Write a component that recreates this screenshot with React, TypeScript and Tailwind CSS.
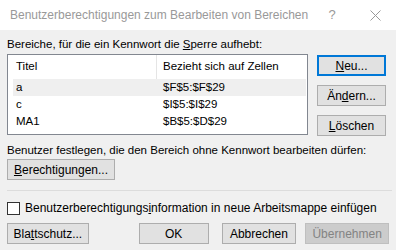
import React from "react";

const font = { fontFamily: '"Liberation Sans", Arial, sans-serif' };

const btn =
  "flex items-center justify-center h-[21px] border border-[#adadad] bg-[#e1e1e1] text-[12px] text-black leading-none whitespace-nowrap";

const rows = [
  { title: "a", ref: "$F$5:$F$29", selected: true },
  { title: "c", ref: "$I$5:$I$29", selected: false },
  { title: "MA1", ref: "$B$5:$D$29", selected: false },
];

export default function App() {
  return (
    <div className="w-[396px] h-[250px] bg-[#f0f0f0] flex flex-col overflow-hidden whitespace-nowrap" style={font}>
      {/* Titelleiste */}
      <div className="h-[30px] bg-white flex items-center shrink-0">
        <span className="pl-[10px] text-[12px] text-[#999999] flex-1">
          Benutzerberechtigungen zum Bearbeiten von Bereichen
        </span>
        <span className="w-[50px] text-center text-[13px] text-[#999999]">?</span>
        <span className="w-[42px] flex justify-center text-[#999999]">
          <svg width="11" height="11" viewBox="0 0 11 11">
            <path d="M0.5 0.5 L10.5 10.5 M10.5 0.5 L0.5 10.5" stroke="#999999" strokeWidth="1" />
          </svg>
        </span>
      </div>

      <div className="px-[7px] pt-[6px] flex flex-col text-[11.5px] text-black">
        <div className="leading-[16px]">
          Bereiche, für die ein Kennwort die <span className="underline">S</span>perre aufhebt:
        </div>

        <div className="flex mt-[2px] gap-[9px]">
          {/* Liste */}
          <div className="w-[301px] h-[81px] border border-[#828790] bg-white pl-[5px] pr-[1px]">
            <div className="flex h-[24px] items-center">
              <div className="w-[144px] pl-[3px] border-r border-[#e5e5e5] h-full flex items-center">
                Titel
              </div>
              <div className="pl-[6px]">Bezieht sich auf Zellen</div>
            </div>
            {rows.map((r) => (
              <div
                key={r.title}
                className={`flex h-[17px] items-center ${r.selected ? "bg-[#efefef]" : ""}`}
              >
                <div className="w-[145px] pl-[3px]">{r.title}</div>
                <div className="pl-[5px]">{r.ref}</div>
              </div>
            ))}
          </div>

          {/* Seitenbuttons */}
          <div className="flex flex-col gap-[9px] pt-[1px]">
            <div className={`${btn} w-[69px] !border-2 !border-[#0078d7]`}>
              <span className="underline">N</span>eu...
            </div>
            <div className={`${btn} w-[69px]`}>
              Än<span className="underline">d</span>ern...
            </div>
            <div className={`${btn} w-[69px]`}>
              <span className="underline">L</span>öschen
            </div>
          </div>
        </div>

        <div className="mt-[6px] leading-[16px]">
          Benutzer festlegen, die den Bereich ohne Kennwort bearbeiten dürfen:
        </div>
        <div className={`${btn} w-[108px] mt-[1px]`}>
          <span className="underline">B</span>erechtigungen...
        </div>

        <div className="mt-[10px] h-px bg-[#dcdcdc] w-[385px]" />

        <div className="flex items-center mt-[9px] gap-[5px] leading-[16px] text-[12px]">
          <div className="w-[13px] h-[13px] border border-[#333333] bg-white shrink-0" />
          <span>
            Benutzerberechtigungs<span className="underline">i</span>nformation in neue Arbeitsmappe einfügen
          </span>
        </div>

        <div className="flex mt-[7px]">
          <div className={`${btn} w-[82px]`}>
            Bla<span className="underline">t</span>tschutz...
          </div>
          <div className={`${btn} w-[70px] ml-[50px]`}>OK</div>
          <div className={`${btn} w-[75px] ml-[13px]`}>Abbrechen</div>
          <div className={`${btn} w-[84px] ml-[9px] !bg-[#cccccc] !border-[#bfbfbf] !text-[#838383]`}>
            Übernehmen
          </div>
        </div>
      </div>
    </div>
  );
}
